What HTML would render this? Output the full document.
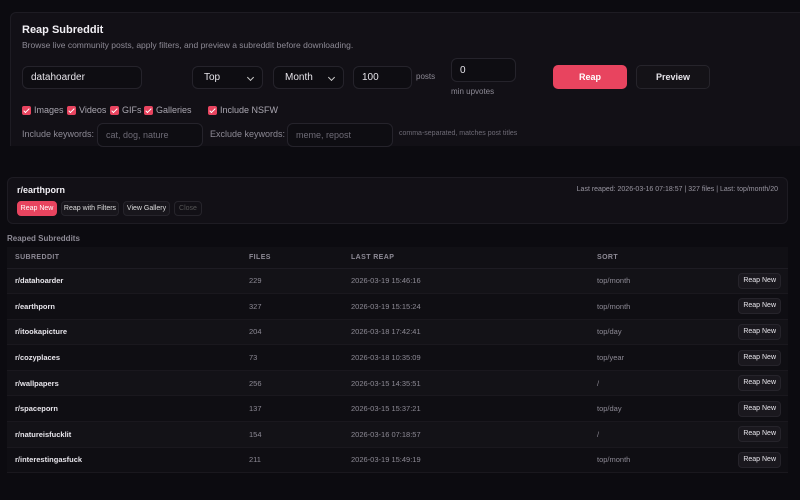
<!DOCTYPE html>
<html><head><meta charset="utf-8"><style>
*{box-sizing:border-box;margin:0;padding:0}
body{width:800px;height:500px;overflow:hidden;background:#0c0b10;font-family:"Liberation Sans",sans-serif;color:#e6e4ea;position:relative}
.abs{position:absolute}
.panel{position:absolute;background:#121016;border:1px solid #1e1c23;border-radius:6px}
.inp{position:absolute;background:#0e0d12;border:1px solid #25232b;border-radius:6px;font-size:10px;color:#e6e4ea;padding-left:8px;display:flex;align-items:center}
.ph{color:#6e6b76;font-size:9px}
.sel:after{content:"";position:absolute;right:9px;top:8px;width:4px;height:4px;border-right:1.3px solid #ccc;border-bottom:1.3px solid #ccc;transform:rotate(45deg)}
.cb{position:absolute;font-size:9px;color:#a9a6b0;display:flex;align-items:center}
.cb i{display:inline-block;width:9px;height:9px;background:#e8445f;border-radius:2px;margin-right:3px;position:relative}
.cb i:after{content:"";position:absolute;left:3px;top:1px;width:2px;height:5px;border-right:1.4px solid #fff;border-bottom:1.4px solid #fff;transform:rotate(45deg)}
.lbl{position:absolute;font-size:9px;color:#8d8a95}
.btn{position:absolute;border-radius:5px;font-size:9px;display:flex;align-items:center;justify-content:center;font-weight:bold}
.sb{position:absolute;border-radius:4px;font-size:7px;display:flex;align-items:center;justify-content:center;background:#18161c;border:1px solid #26242b;color:#ddd;height:15px;top:201px}
table{position:absolute;left:7px;top:247px;width:781px;border-collapse:collapse;font-size:7.5px}
th{height:21px;text-align:left;color:#8d8a95;font-weight:bold;letter-spacing:.4px;font-size:7px;background:#111015;border-bottom:1px solid #1e1c23}
td{height:25.6px;color:#8d8a95;border-bottom:1px solid #1a181e}
tr:nth-child(odd) td{background:#0f0e13}
tr:nth-child(even) td{background:#131217}
td.n{color:#e8e6ec;font-weight:bold}
.rn{display:inline-block;background:#1a181e;border:1px solid #26242b;border-radius:4px;color:#e8e6ec;font-size:7px;padding:3px 4px;line-height:8px}
</style></head><body>
<div class="panel" style="left:10px;top:12px;width:800px;height:134px;border-bottom:none;border-radius:6px 0 0 0"></div>
<div class="abs" style="left:22px;top:24px;font-size:11px;font-weight:bold;color:#f2f0f5">Reap Subreddit</div>
<div class="abs" style="left:22px;top:40px;font-size:8.5px;color:#8d8a95">Browse live community posts, apply filters, and preview a subreddit before downloading.</div>
<div class="inp" style="left:22px;top:66px;width:120px;height:23px">datahoarder</div>
<div class="inp sel" style="left:192px;top:66px;width:71px;height:23px;padding-left:11px">Top</div>
<div class="inp sel" style="left:273px;top:66px;width:71px;height:23px;padding-left:11px">Month</div>
<div class="inp" style="left:353px;top:66px;width:59px;height:23px">100</div>
<div class="lbl" style="left:416px;top:72px;font-size:8px">posts</div>
<div class="inp" style="left:451px;top:58px;width:65px;height:24px">0</div>
<div class="lbl" style="left:451px;top:87px;font-size:8px">min upvotes</div>
<div class="btn" style="left:553px;top:65px;width:74px;height:24px;background:#e8445f;color:#fff">Reap</div>
<div class="btn" style="left:636px;top:65px;width:74px;height:24px;background:#141217;border:1px solid #26242b;color:#e6e4ea">Preview</div>
<div class="cb" style="left:22px;top:105px"><i></i>Images</div>
<div class="cb" style="left:67px;top:105px"><i></i>Videos</div>
<div class="cb" style="left:110px;top:105px"><i></i>GIFs</div>
<div class="cb" style="left:144px;top:105px"><i></i>Galleries</div>
<div class="cb" style="left:208px;top:105px"><i></i>Include NSFW</div>
<div class="lbl" style="left:22px;top:129px">Include keywords:</div>
<div class="inp" style="left:97px;top:123px;width:106px;height:24px"><span class="ph">cat, dog, nature</span></div>
<div class="lbl" style="left:210px;top:129px">Exclude keywords:</div>
<div class="inp" style="left:287px;top:123px;width:106px;height:24px"><span class="ph">meme, repost</span></div>
<div class="lbl" style="left:399px;top:130px;font-size:7px;color:#6e6b76">comma-separated, matches post titles</div>

<div class="panel" style="left:7px;top:177px;width:781px;height:47px"></div>
<div class="abs" style="left:17px;top:185px;font-size:9px;font-weight:bold;color:#f2f0f5">r/earthporn</div>
<div class="abs" style="right:22px;top:186px;font-size:7px;color:#9a97a2">Last reaped: 2026-03-16 07:18:57 | 327 files | Last: top/month/20</div>
<div class="sb" style="left:17px;width:40px;background:#e8445f;border-color:#e8445f;color:#fff">Reap New</div>
<div class="sb" style="left:61px;width:58px">Reap with Filters</div>
<div class="sb" style="left:123px;width:47px">View Gallery</div>
<div class="sb" style="left:174px;width:28px;color:#555;background:#121016">Close</div>
<div class="abs" style="left:7px;top:234px;font-size:8px;font-weight:bold;color:#8d8a95">Reaped Subreddits</div>
<table>
<tr><th style="padding-left:8px;width:242px">SUBREDDIT</th><th style="width:102px">FILES</th><th style="width:246px">LAST REAP</th><th>SORT</th><th></th></tr>
<tr><td class="n" style="padding-left:8px">r/datahoarder</td><td>229</td><td>2026-03-19 15:46:16</td><td>top/month</td><td style="text-align:right;padding-right:7px"><span class="rn">Reap New</span></td></tr>
<tr><td class="n" style="padding-left:8px">r/earthporn</td><td>327</td><td>2026-03-19 15:15:24</td><td>top/month</td><td style="text-align:right;padding-right:7px"><span class="rn">Reap New</span></td></tr>
<tr><td class="n" style="padding-left:8px">r/itookapicture</td><td>204</td><td>2026-03-18 17:42:41</td><td>top/day</td><td style="text-align:right;padding-right:7px"><span class="rn">Reap New</span></td></tr>
<tr><td class="n" style="padding-left:8px">r/cozyplaces</td><td>73</td><td>2026-03-18 10:35:09</td><td>top/year</td><td style="text-align:right;padding-right:7px"><span class="rn">Reap New</span></td></tr>
<tr><td class="n" style="padding-left:8px">r/wallpapers</td><td>256</td><td>2026-03-15 14:35:51</td><td>/</td><td style="text-align:right;padding-right:7px"><span class="rn">Reap New</span></td></tr>
<tr><td class="n" style="padding-left:8px">r/spaceporn</td><td>137</td><td>2026-03-15 15:37:21</td><td>top/day</td><td style="text-align:right;padding-right:7px"><span class="rn">Reap New</span></td></tr>
<tr><td class="n" style="padding-left:8px">r/natureisfucklit</td><td>154</td><td>2026-03-16 07:18:57</td><td>/</td><td style="text-align:right;padding-right:7px"><span class="rn">Reap New</span></td></tr>
<tr><td class="n" style="padding-left:8px">r/interestingasfuck</td><td>211</td><td>2026-03-19 15:49:19</td><td>top/month</td><td style="text-align:right;padding-right:7px"><span class="rn">Reap New</span></td></tr>
</table>
</body></html>
